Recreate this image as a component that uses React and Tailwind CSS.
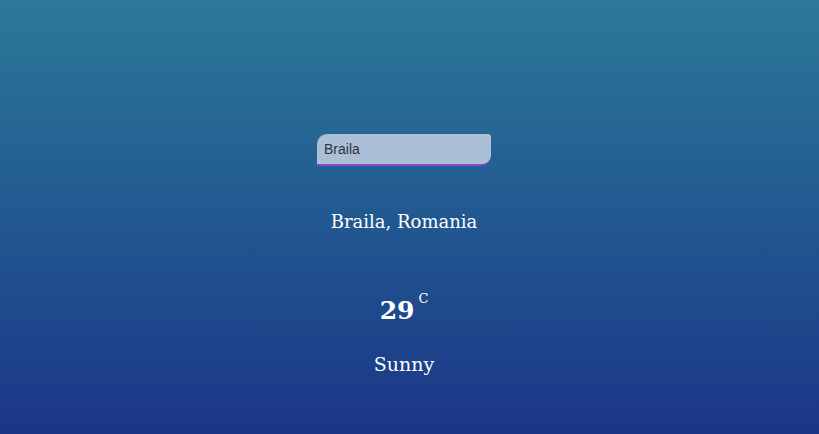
export default function App() {
  return (
    <div className="min-h-screen w-full bg-gradient-to-b from-[#2d7998] to-[#1c3587] flex flex-col items-center pt-[134px] pr-[11px] font-['DejaVu_Serif',serif] text-white">
      <input
        type="text"
        defaultValue="Braila"
        className="w-[174px] h-[32px] px-[7px] bg-[#abc0d7] text-[#2c3340] text-[14px] font-['Liberation_Sans',sans-serif] rounded-tl-[10px] rounded-br-[10px] rounded-tr-[3px] border-b-2 border-[#8b45d6] outline-none"
      />
      <div className="mt-[42px] text-[18px] leading-[28px]">Braila, Romania</div>
      <div className="mt-[59px] flex items-start leading-none">
        <span className="text-[25px] font-bold mt-[3px]">29</span>
        <span className="text-[13px] ml-[4px] -mt-[3px]">C</span>
      </div>
      <div className="mt-[27px] text-[19px] leading-[28px]">Sunny</div>
    </div>
  );
}
